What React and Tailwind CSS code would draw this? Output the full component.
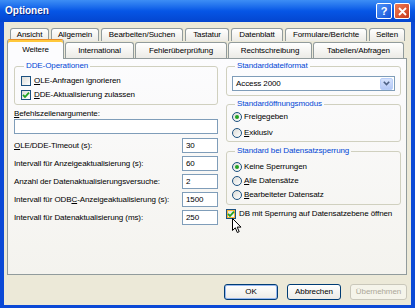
import React from "react";

function Check({ checked, hover }) {
  return (
    <span
      className={`w-[10px] h-[10px] border border-[#1c5180] bg-gradient-to-br from-[#dcdcd7] to-white flex items-center justify-center shrink-0 ${
        hover ? "shadow-[inset_0_0_0_1px_#f8b636]" : ""
      }`}
    >
      {checked && (
        <svg width="8" height="8" viewBox="0 0 8 8">
          <path d="M1 3.8 L3 6 L7 1.6" stroke="#21a121" strokeWidth="1.8" fill="none" />
        </svg>
      )}
    </span>
  );
}

function Radio({ on }) {
  return (
    <span className="w-[10px] h-[10px] rounded-full border border-[#1c5180] bg-gradient-to-br from-[#dcdcd7] to-white flex items-center justify-center shrink-0">
      {on && <span className="w-[4px] h-[4px] rounded-full bg-[#21a121]" />}
    </span>
  );
}

function Tab({ w, children }) {
  return (
    <div
      className="h-[13px] border border-b-0 border-[#919b9c] rounded-t-[3px] bg-gradient-to-b from-white to-[#ecebe6] flex items-center justify-center text-black whitespace-nowrap overflow-hidden"
      style={{ width: w }}
    >
      {children}
    </div>
  );
}

function Tab2({ w, children }) {
  return (
    <div
      className="h-[16px] border border-b-0 border-[#919b9c] rounded-t-[3px] bg-gradient-to-b from-white to-[#ecebe6] flex items-center justify-center text-black whitespace-nowrap overflow-hidden"
      style={{ width: w }}
    >
      {children}
    </div>
  );
}

function Field({ label, value }) {
  return (
    <div className="h-[15px] flex items-center justify-between">
      <span className="whitespace-nowrap">{label}</span>
      <div className="w-[36px] h-[15px] border border-[#7f9db9] bg-white flex items-center pl-[3px]">
        {value}
      </div>
    </div>
  );
}

function Btn({ children, def, disabled, w }) {
  return (
    <div
      className={`h-[16px] rounded-[3px] border flex items-center justify-center ${
        disabled
          ? "border-[#c9c7ba] text-[#aca899] bg-[#f5f4ea]"
          : def
          ? "border-[#003c74] bg-gradient-to-b from-white to-[#ecebe6] shadow-[inset_0_0_0_1px_#98b8ef]"
          : "border-[#003c74] bg-gradient-to-b from-white to-[#ecebe6]"
      }`}
      style={{ width: w }}
    >
      {children}
    </div>
  );
}

export default function App() {
  return (
    <div className="relative w-[415px] h-[308px] bg-[#0b49d6] flex flex-col text-[8px] leading-[10px] tracking-[-0.1px] text-black [font-family:'Liberation_Sans',Arial,sans-serif] overflow-hidden">
      {/* title bar */}
      <div className="h-[22px] shrink-0 flex items-center justify-between px-[5px] bg-gradient-to-b from-[#3d8ef5] via-[#0656e6] to-[#0445cf]">
        <span className="text-white font-bold text-[10px] tracking-normal [text-shadow:1px_1px_0_#0a2a8a]">Optionen</span>
        <div className="flex gap-[2px]">
          <div className="w-[16px] h-[16px] rounded-[2px] border border-white bg-gradient-to-br from-[#4f93fa] to-[#1651d6] flex items-center justify-center text-white font-bold text-[11px]">
            ?
          </div>
          <div className="w-[16px] h-[16px] rounded-[2px] border border-white bg-gradient-to-br from-[#f07a52] to-[#c6381a] flex items-center justify-center">
            <svg width="9" height="9" viewBox="0 0 9 9">
              <path d="M1 1 L8 8 M8 1 L1 8" stroke="white" strokeWidth="1.8" />
            </svg>
          </div>
        </div>
      </div>

      {/* body */}
      <div className="flex-1 mx-[4px] mb-[3px] bg-[#ece9d8] flex flex-col pl-[3px] pr-[4px] pt-[6px] pb-[5px]">
        {/* tab row 1 */}
        <div className="flex gap-[2px] ml-[3px]">
          <Tab w={39}>Ansicht</Tab>
          <Tab w={48}>Allgemein</Tab>
          <Tab w={82}>Bearbeiten/Suchen</Tab>
          <Tab w={44}>Tastatur</Tab>
          <Tab w={52}>Datenblatt</Tab>
          <Tab w={82}>Formulare/Berichte</Tab>
          <Tab w={36}>Seiten</Tab>
        </div>
        {/* tab row 2 */}
        <div className="h-[17px] flex items-end gap-[1px]">
          <div className="relative z-10 w-[57px] h-[20px] -mb-[1px] border border-b-0 border-[#919b9c] border-t-[#e68b2c] rounded-t-[3px] bg-[#fcfcfe] shadow-[inset_0_2px_0_#ffc83c] flex items-center justify-center pt-[1px]">
            Weitere
          </div>
          <Tab2 w={69}>International</Tab2>
          <Tab2 w={92}>Fehlerüberprüfung</Tab2>
          <Tab2 w={84}>Rechtschreibung</Tab2>
          <Tab2 w={91}>Tabellen/Abfragen</Tab2>
        </div>

        {/* panel */}
        <div className="h-[217px] border border-[#919b9c] bg-gradient-to-b from-[#fcfcfe] to-[#f4f3ee] flex gap-[8px] pl-[6px] pr-[5px] pt-[2px]">
          {/* left column */}
          <div className="w-[204px] flex flex-col">
            <fieldset className="border border-[#d0d0bf] rounded-[3px] px-[6px] pt-[5px] pb-[4px] flex flex-col gap-[4px]">
              <legend className="ml-[3px] px-[2px] text-[#0046d5]">DDE-Operationen</legend>
              <div className="h-[10px] flex items-center gap-[3px]">
                <Check />
                <span><u>O</u>LE-Anfragen ignorieren</span>
              </div>
              <div className="h-[10px] flex items-center gap-[3px]">
                <Check checked />
                <span><u>D</u>DE-Aktualisierung zulassen</span>
              </div>
            </fieldset>
            <div className="mt-[4px]"><u>B</u>efehlszeilenargumente:</div>
            <div className="h-[15px] border border-[#7f9db9] bg-white" />
            <div className="mt-[4px] flex flex-col gap-[3px]">
              <Field label={<><u>O</u>LE/DDE-Timeout (s):</>} value="30" />
              <Field label={<>Intervall für Anzeigeaktualisierung (s):</>} value="60" />
              <Field label={<>Anzahl der Datenaktualisierungsversuche:</>} value="2" />
              <Field label={<>Intervall für ODB<u>C</u>-Anzeigeaktualisierung (s):</>} value="1500" />
              <Field label={<>Intervall für Datenaktualisierung (ms):</>} value="250" />
            </div>
          </div>

          {/* right column */}
          <div className="flex-1 flex flex-col">
            <fieldset className="border border-[#d0d0bf] rounded-[3px] px-[5px] pt-[5px] pb-[4px]">
              <legend className="ml-[3px] px-[2px] text-[#0046d5]">Standarddateiformat</legend>
              <div className="h-[15px] border border-[#7f9db9] bg-white flex items-center justify-between pl-[3px] pr-[1px]">
                <span>Access 2000</span>
                <div className="w-[13px] h-[12px] rounded-[2px] bg-gradient-to-b from-[#d6e2fd] to-[#b4c8f6] border border-[#b9cef9] flex items-center justify-center">
                  <svg width="7" height="5" viewBox="0 0 7 5">
                    <path d="M0.8 0.8 L3.5 3.6 L6.2 0.8" stroke="#4d6185" strokeWidth="1.6" fill="none" />
                  </svg>
                </div>
              </div>
            </fieldset>
            <fieldset className="mt-[3px] border border-[#d0d0bf] rounded-[3px] px-[5px] pt-[3px] pb-[3px] flex flex-col gap-[6px]">
              <legend className="ml-[3px] px-[2px] text-[#0046d5]">Standardöffnungsmodus</legend>
              <div className="h-[10px] flex items-center gap-[2px]">
                <Radio on />
                <span>Freigegeben</span>
              </div>
              <div className="h-[10px] flex items-center gap-[2px]">
                <Radio />
                <span><u>E</u>xklusiv</span>
              </div>
            </fieldset>
            <fieldset className="mt-[4px] border border-[#d0d0bf] rounded-[3px] px-[5px] pt-[6px] pb-[4px] flex flex-col gap-[4px]">
              <legend className="ml-[3px] px-[2px] text-[#0046d5]">Standard bei Datensatzsperrung</legend>
              <div className="h-[10px] flex items-center gap-[2px]">
                <Radio on />
                <span>Keine Sperrungen</span>
              </div>
              <div className="h-[10px] flex items-center gap-[2px]">
                <Radio />
                <span><u>A</u>lle Datensätze</span>
              </div>
              <div className="h-[10px] flex items-center gap-[2px]">
                <Radio />
                <span><u>B</u>earbeiteter Datensatz</span>
              </div>
            </fieldset>
            <div className="mt-[4px] h-[10px] flex items-center gap-[3px] whitespace-nowrap">
              <Check checked hover />
              <span>DB mit Sperrung auf Datensatzebene öffnen</span>
            </div>
          </div>
        </div>

        {/* buttons */}
        <div className="mt-[9px] flex justify-end gap-[9px]">
          <Btn w={54} def>OK</Btn>
          <Btn w={54}>Abbrechen</Btn>
          <Btn w={57} disabled>Übernehmen</Btn>
        </div>
      </div>

      {/* mouse cursor */}
      <svg className="absolute left-[232px] top-[218px]" width="11" height="16" viewBox="0 0 11 16">
        <path d="M0.5 0.5 L0.5 12.5 L3.3 9.8 L5.3 14.5 L7.2 13.7 L5.2 9.1 L9 9.1 Z" fill="white" stroke="black" strokeWidth="1" />
      </svg>
    </div>
  );
}
